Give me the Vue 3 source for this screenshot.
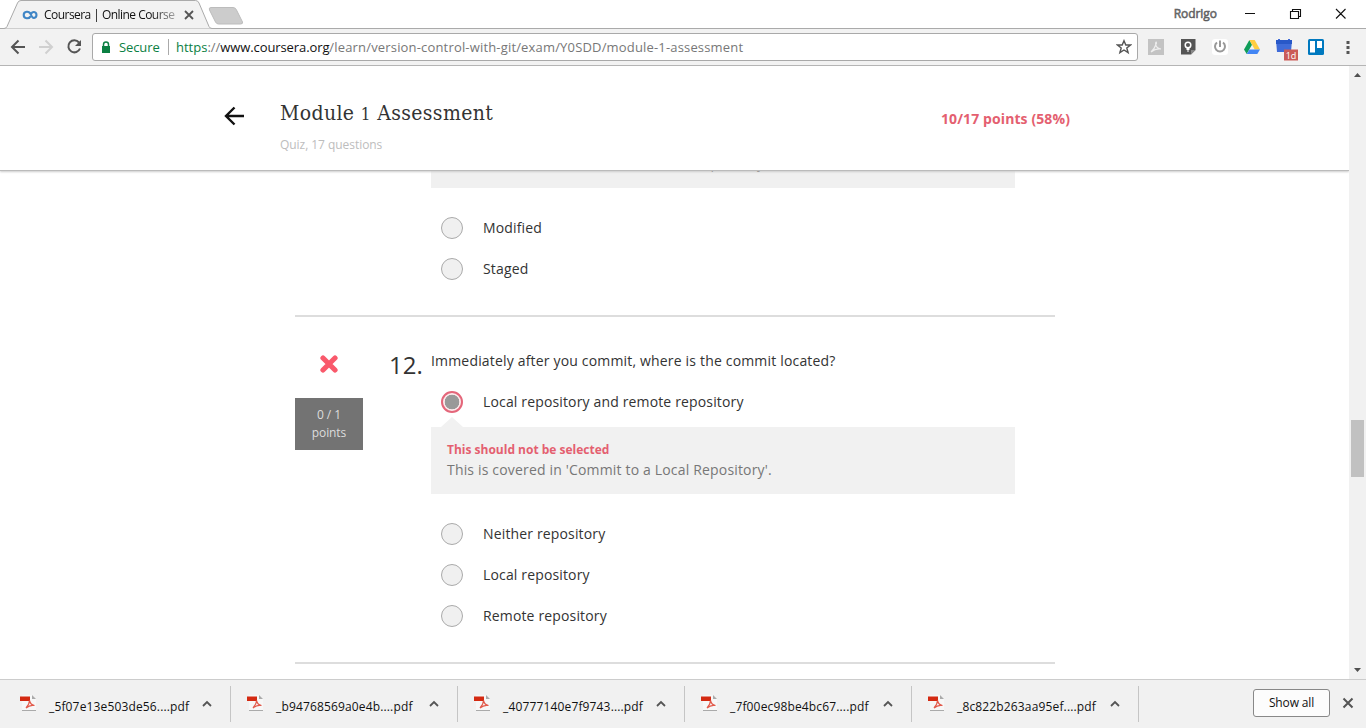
<script setup>
const before = ['Modified', 'Staged']
const after = ['Neither repository', 'Local repository', 'Remote repository']
const downloads = ['_5f07e13e503de56....pdf', '_b94768569a0e4b....pdf', '_40777140e7f9743....pdf', '_7f00ec98be4bc67....pdf', '_8c822b263aa95ef....pdf']
</script>

<template>
  <div class="window">
    <div class="titlebar">
      <svg class="tabshape" width="250" height="29" viewBox="0 0 250 29">
        <path d="M0 28.500H4Q6 28.500 7 26.500L17.500 3Q18.500 .5 21 .5H195.500Q198 .5 199 3L209 26.500Q210 28.500 212 28.500H250V29H0Z" fill="#f2f2f2" stroke="#aaa" />
        <path d="M211 7.500H233Q235.500 7.500 236.500 10L242.500 22Q243 24 240.500 24H218.500Q216.500 24 215.500 22L209.500 10Q208.500 7.500 211 7.500Z" fill="#ccc" stroke="#bcbcbc" />
      </svg>
      <div class="tab">
        <svg width="16" height="10" viewBox="0 0 16 10"><path d="M8.600 6.200C7.200 9.200 1.700 9 1.700 5S7.200 .8 8.600 4C9.800 7.200 10.800 8.100 12 8C15.300 7.500 15.300 2.500 12 2C10.600 1.900 9.800 2.600 9.200 3.800" fill="none" stroke="#4086c6" stroke-width="2.100" /></svg>
        <span class="tabtitle">Coursera | Online Course</span>
        <svg class="x" width="10" height="10" viewBox="0 0 10 10"><path d="M1 1L9 9M9 1L1 9" stroke="#555" stroke-width="1.800" /></svg>
      </div>
      <div class="controls">
        <span class="user">Rodrigo</span>
        <svg width="110" height="20" viewBox="0 0 110 20"><path d="M2 9.500H12M47.500 7.500H55.500V14.500H47.500ZM49.500 7V5.500H57.500V12.500H56M93 5L102.500 14.500M102.500 5L93 14.500" fill="none" stroke="#111" stroke-width="1.100" /></svg>
      </div>
    </div>
    <div class="toolbar">
      <svg class="nav" width="84" height="20" viewBox="0 0 84 20">
        <path d="M25 10H12M18.500 3.500L12 10L18.500 16.500" fill="none" stroke="#555" stroke-width="2" />
        <path d="M39 10H52M45.500 3.500L52 10L45.500 16.500" fill="none" stroke="#d0d0d0" stroke-width="2" />
        <path d="M79 5.500A6 6 0 1 0 80 11.500" fill="none" stroke="#555" stroke-width="2" /><path d="M81 3V9H75Z" fill="#555" />
      </svg>
      <div class="address">
        <svg width="10" height="13" viewBox="0 0 10 13"><path d="M2.500 6V3.500Q2.500 1 5 1T7.500 3.500V6" fill="none" stroke="#0b8043" stroke-width="1.500" /><rect x="1" y="5" width="8" height="7" fill="#0b8043" /></svg>
        <span class="secure">Secure</span>
        <i></i>
        <span class="url"><span class="scheme">https</span><span class="sep">://</span><span class="host">www.coursera.org</span><span class="path">/learn/version-control-with-git/exam/Y0SDD/module-1-assessment</span></span>
        <svg class="star" width="16" height="16" viewBox="0 0 16 16"><path d="M8 1.700L9.800 6H14.500L10.800 9L12.100 13.700L8 11L3.900 13.700L5.200 9L1.500 6H6.200Z" fill="none" stroke="#555" stroke-width="1.400" /></svg>
      </div>
      <div class="extensions">
        <svg width="16" height="16" viewBox="0 0 16 16"><rect width="16" height="16" fill="#c3c3c3" /><path d="M3 13Q6.500 10 7.700 6Q7.500 3 8.200 3Q9 4 7.700 6Q9 9.500 13 10Q8 9 3 13Z" fill="none" stroke="#eee" stroke-width="1.200" /></svg>
        <svg width="16" height="16" viewBox="0 0 16 16"><path d="M1 0H15.500V11L11 15.500H1Z" fill="#555" /><path d="M11 15.500V11H15.500Z" fill="#888" /><circle cx="8" cy="6" r="2.800" fill="none" stroke="#fff" stroke-width="1.500" /><path d="M6.500 8.500H9.500V11H6.500ZM7 11.500H9V12.500H7Z" fill="#fff" /></svg>
        <svg width="16" height="16" viewBox="0 0 16 16"><rect width="16" height="16" rx="3" fill="#fff" /><path d="M5 3.500A5 5 0 1 0 11 3.500M8 1.500V8" fill="none" stroke="#999" stroke-width="2" /></svg>
        <svg width="16" height="16" viewBox="0 0 16 16"><path d="M5.400 1L0 10.400L2.700 15L8 5.700Z" fill="#0f9d58" /><path d="M5.400 1H10.700L16 10.400H10.700Z" fill="#ffcd40" /><path d="M5.400 10.400H16L13.300 15H2.700Z" fill="#4285f4" /></svg>
        <svg width="22" height="22" viewBox="0 0 22 22"><path d="M0 1H2V0H4V1H12V0H14V1H16L15 13H1Z" fill="#3f6bd8" /><path d="M0 1H16V5H0Z" fill="#2858c8" /><rect x="8" y="10.500" width="14" height="11" fill="#cb5b57" /><text x="15" y="19.500" text-anchor="middle" class="badge">1d</text></svg>
        <svg width="16" height="16" viewBox="0 0 16 16"><rect width="16" height="16" rx="1.500" fill="#0079bf" /><path d="M2 2H7V13.500H2ZM9 2H14V9H9Z" fill="#fff" /></svg>
        <svg class="menu" width="4" height="16" viewBox="0 0 4 16"><path d="M.5 2H3.500V5H.5ZM.5 7H3.500V10H.5ZM.5 12H3.500V15H.5Z" fill="#555" /></svg>
      </div>
    </div>

    <div class="viewport">
      <main>
        <header>
          <svg class="back" width="20" height="20" viewBox="0 0 20 20"><path d="M20 10H2M10.500 1.500L2 10L10.500 18.500" fill="none" stroke="#111" stroke-width="2.400" /></svg>
          <div class="heading">
            <h1>Module <small>1</small> Assessment</h1>
            <p>Quiz, 17 questions</p>
          </div>
          <strong class="score">10/17 points (58%)</strong>
        </header>
        <div class="quiz">
          <section class="previous">
            <div class="remnant"><span>repository.</span></div>
            <label v-for="o in before" :key="o" class="option"><i></i><span>{{ o }}</span></label>
          </section>
          <section class="question">
            <aside>
              <svg width="18" height="18" viewBox="0 0 18 18"><path d="M3 3L15 15M15 3L3 15" stroke="#f9596b" stroke-width="5.200" stroke-linecap="round" /></svg>
              <div class="points"><span>0 / 1</span><span>points</span></div>
            </aside>
            <div class="number">12.</div>
            <div class="answers">
              <p class="prompt">Immediately after you commit, where is the commit located?</p>
              <label class="option chosen"><i></i><span>Local repository and remote repository</span></label>
              <div class="feedback"><b>This should not be selected</b><span>This is covered in 'Commit to a Local Repository'.</span></div>
              <label v-for="o in after" :key="o" class="option"><i></i><span>{{ o }}</span></label>
            </div>
          </section>
        </div>
      </main>
      <div class="scrollbar">
        <svg width="17" height="17" viewBox="0 0 17 17"><path d="M5 11L8.500 7L12 11Z" fill="#505050" /></svg>
        <div class="thumb"></div>
        <svg width="17" height="17" viewBox="0 0 17 17"><path d="M5 6L8.500 10L12 6Z" fill="#505050" /></svg>
      </div>
    </div>

    <footer>
      <div v-for="d in downloads" :key="d" class="download">
        <svg class="pdf" width="17" height="16" viewBox="0 0 17 16"><path d="M2 0H12L16 4V16H2Z" fill="#f7f7f7" /><path d="M12 0V4H16Z" fill="#aaa" /><path d="M2 15.500H16" stroke="#aaa" /><path d="M0 1.500H10V6H0Z" fill="#d42a12" /><path d="M6 13Q9.500 9 9.500 5.500Q10.500 10 14.500 10.500Q10 9.500 6 13" fill="none" stroke="#e25a4b" stroke-width="1.200" /></svg>
        <span>{{ d }}</span>
        <svg class="chev" width="10" height="7" viewBox="0 0 10 7"><path d="M1 6L5 2L9 6" fill="none" stroke="#555" stroke-width="1.800" /></svg>
      </div>
      <button>Show all</button>
      <svg class="close" width="12" height="12" viewBox="0 0 12 12"><path d="M1.500 1.500L10.500 10.500M10.500 1.500L1.500 10.500" stroke="#555" stroke-width="2" /></svg>
    </footer>
  </div>
</template>

<style>
body { margin: 0; background: #fff; overflow: hidden; }
</style>
<style scoped>
.window { width: 1366px; height: 728px; display: flex; flex-direction: column; font-family: "Open Sans", "Noto Sans", sans-serif; font-size: 14px; color: #333; white-space: nowrap; overflow: hidden; }
.window * { box-sizing: border-box; }
svg { display: block; flex: none; }
p, h1 { margin: 0; font-weight: 400; }
.titlebar { height: 29px; flex: none; display: flex; justify-content: space-between; position: relative; border-bottom: 1px solid #aaa; }
.tabshape { position: absolute; left: 0; top: 0; }
.tab { position: relative; width: 194px; padding: 1px 0 0 22px; display: flex; align-items: center; color: #111; font-size: 12px; }
.tabtitle { width: 132px; margin-left: 6px; overflow: hidden; letter-spacing: -.54px; mask-image: linear-gradient(90deg, #000 82%, transparent 108%); }
.x { margin-left: 8px; }
.controls { display: flex; align-items: center; padding-right: 13px; height: 27px; }
.user { font-size: 12px; margin-right: 26px; color: #777; letter-spacing: -.05px; -webkit-text-stroke: .5px #555; }
.toolbar { height: 37px; flex: none; display: flex; align-items: center; background: #f2f2f2; border-bottom: 1px solid #b5b5b5; }
.nav { margin-right: 8px; }
.address { width: 1046px; height: 28px; border: 1px solid #a9a9a9; border-radius: 3px; background: #fff; display: flex; align-items: center; padding: 0 5px 0 8px; }
.address i { width: 1px; height: 16px; background: #aaa; margin: 0 7px 0 8px; }
.secure { color: #0b8043; margin-left: 8px; font-size: 13px; width: 41px; letter-spacing: -.1px; }
.url { flex: 1; font-size: 13px; }
.scheme { color: #0b8043; }
.sep, .path { color: #777; }
.host { color: #111; letter-spacing: -.1px; }
.path { letter-spacing: .17px; }
.extensions { display: flex; align-items: center; margin-left: 10px; gap: 16px; }
.extensions svg:nth-child(5) { margin: 6px -6px 0 0; }
.extensions .menu { margin-left: 6px; }
.badge { font: 9px "Open Sans", sans-serif; fill: #fff; }
.viewport { flex: 1; min-height: 0; display: flex; }
main { width: 1349px; overflow: hidden; }
header { height: 105px; border-bottom: 1px solid #bbb; box-shadow: 0 1px 2px #ccc; display: flex; padding-left: 224px; position: relative; }
.back { margin-top: 40px; }
.heading { margin-left: 36px; width: 661px; padding-top: 32px; }
h1 { font: 21px/31px "DejaVu Serif Condensed", "DejaVu Serif", serif; letter-spacing: .36px; }
h1 small { font-size: 17px; }
.heading p { font-size: 12px; line-height: 18px; margin-top: 6px; color: #bdbdbd; letter-spacing: -.05px; }
.score { color: #e45f70; font-size: 14px; line-height: 20px; margin-top: 43px; letter-spacing: .1px; }
.quiz { width: 760px; margin-left: 295px; }
.previous { height: 146px; border-bottom: 2px solid #ddd; padding-left: 136px; }
.remnant { width: 584px; height: 17px; background: #f0f0f0; margin-bottom: 19px; overflow: hidden; padding-left: 266px; }
.remnant span { display: block; margin-top: -18px; line-height: 20px; }
.option { display: flex; align-items: center; height: 41px; padding-left: 10px; letter-spacing: .15px; }
.option i { width: 22px; height: 22px; border: 1px solid #aaa; border-radius: 50%; background: #f0f0f0; margin-right: 20px; }
.chosen i { border: 2px solid #e4667a; background: radial-gradient(circle, #999 0 7px, #fbe9eb 7.600px); }
.question { height: 347px; border-bottom: 2px solid #ddd; display: flex; }
aside { width: 68px; padding-top: 38px; }
aside svg { margin-left: 25px; }
.points { margin-top: 25px; height: 52px; background: #737373; color: #ddd; font-size: 12px; display: flex; flex-direction: column; align-items: center; line-height: 18px; padding-top: 8px; letter-spacing: -.1px; }
.number { width: 68px; padding: 31px 0 0 26px; font-size: 24px; line-height: 34px; }
.answers { width: 584px; padding-top: 34px; }
.prompt { line-height: 20px; margin-bottom: 10px; letter-spacing: .175px; }
.feedback { position: relative; background: #f1f1f1; height: 67px; margin: 5px 0 19px; padding: 13px 16px; display: flex; flex-direction: column; color: #777; line-height: 20px; letter-spacing: .17px; }
.feedback::before { content: ""; position: absolute; left: 10px; top: -10px; border: 11px solid transparent; border-top: 0; border-bottom: 10px solid #f1f1f1; }
.feedback b { color: #e45f70; font-size: 12px; letter-spacing: 0; }
.scrollbar { width: 17px; background: #f1f1f1; display: flex; flex-direction: column; }
.thumb { width: 13px; height: 57px; background: #c1c1c1; margin: 337px 2px auto; }
footer { height: 49px; flex: none; background: #f1f1f1; border-top: 1px solid #ccc; display: flex; align-items: center; color: #111; font-size: 12px; }
.download { width: 227px; height: 36px; border-right: 1px solid #c5c5c5; display: flex; align-items: center; padding-left: 16px; }
.download:first-child { width: 231px; padding-left: 20px; }
.download span { width: 141px; margin: 5px 12px 0; letter-spacing: .15px; }
.pdf { margin-top: -2px; }
.chev { margin-top: -1px; }
button { margin-left: auto; width: 77px; height: 28px; padding: 0 0 2px; margin-top: -2px; border: 1px solid #888; border-radius: 3px; background: #fcfcfc; font: 12px "Open Sans", sans-serif; letter-spacing: -.15px; color: #111; }
.close { margin: -2px 12px 0; }
</style>
